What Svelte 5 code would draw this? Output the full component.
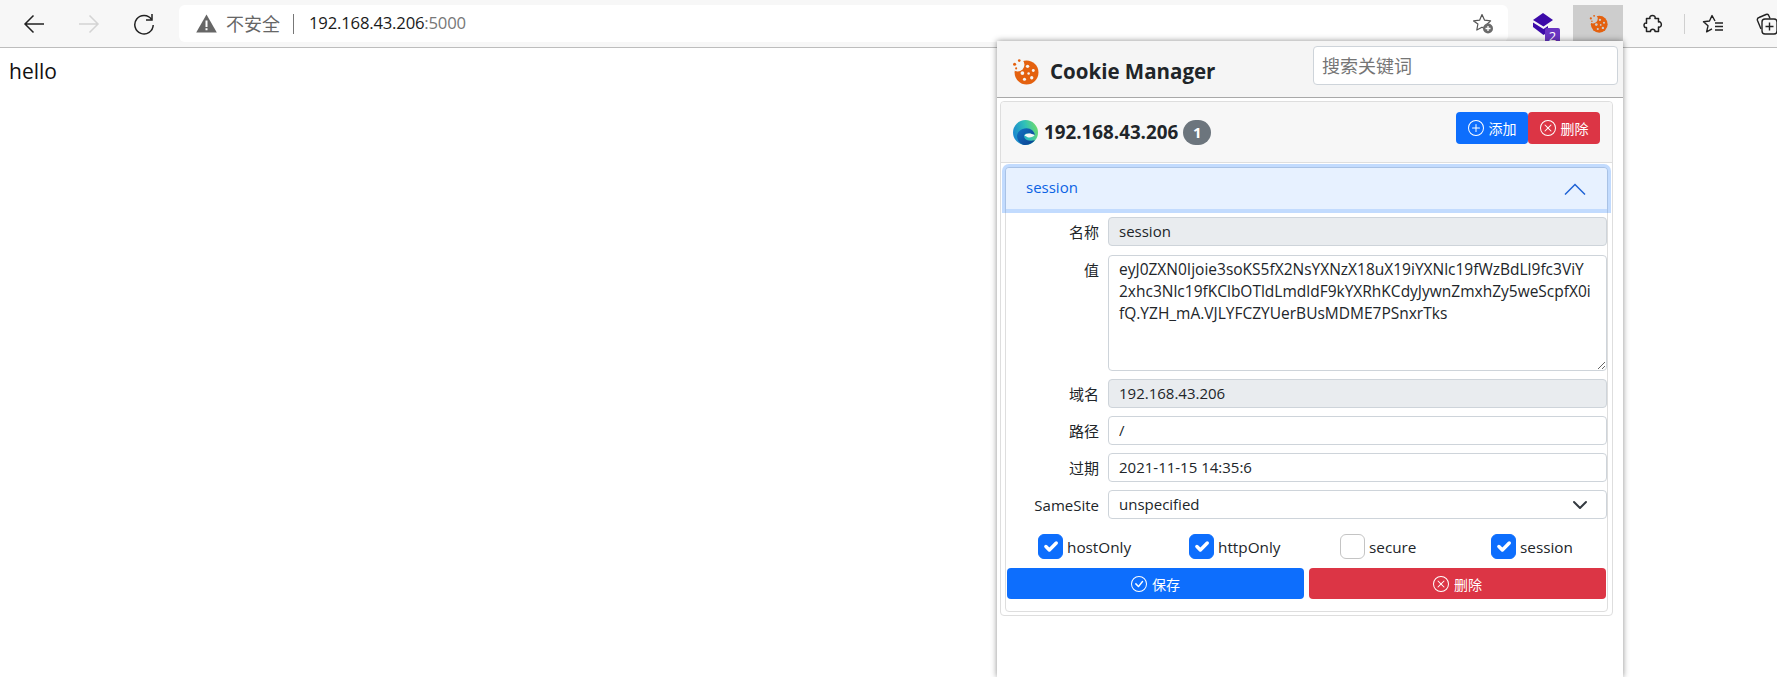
<script>
	const fields = [
		{ label: '域名', value: '192.168.43.206', readonly: true },
		{ label: '路径', value: '/' },
		{ label: '过期', value: '2021-11-15 14:35:6' }
	];
	const flags = [
		{ name: 'hostOnly', checked: true },
		{ name: 'httpOnly', checked: true },
		{ name: 'secure', checked: false },
		{ name: 'session', checked: true }
	];
	const cookieValue =
		'eyJ0ZXN0Ijoie3soKS5fX2NsYXNzX18uX19iYXNlc19fWzBdLl9fc3ViY\n2xhc3Nlc19fKClbOTldLmdldF9kYXRhKCdyJywnZmxhZy5weScpfX0i\nfQ.YZH_mA.VJLYFCZYUerBUsMDME7PSnxrTks';
	const circle = 'M8 15A7 7 0 1 1 8 1a7 7 0 0 1 0 14zm0 1A8 8 0 1 0 8 0a8 8 0 0 0 0 16z';
	const plus = 'M8 4a.5.5 0 0 1 .5.5v3h3a.5.5 0 0 1 0 1h-3v3a.5.5 0 0 1-1 0v-3h-3a.5.5 0 0 1 0-1h3v-3A.5.5 0 0 1 8 4z';
	const cross = 'M4.646 4.646a.5.5 0 0 1 .708 0L8 7.293l2.646-2.647a.5.5 0 0 1 .708.708L8.707 8l2.647 2.646a.5.5 0 0 1-.708.708L8 8.707l-2.646 2.647a.5.5 0 0 1-.708-.708L7.293 8 4.646 5.354a.5.5 0 0 1 0-.708z';
	const tick = 'M10.97 4.97a.235.235 0 0 0-.02.022L7.477 9.417 5.384 7.323a.75.75 0 0 0-1.06 1.06L6.97 11.03a.75.75 0 0 0 1.079-.02l3.992-4.99a.75.75 0 0 0-1.071-1.05z';
</script>

{#snippet cookie(size, bite)}
	<svg width={size} height={size} viewBox="0 0 26 26">
		<circle cx="14" cy="14" r="11.5" fill="#e4610f" />
		<circle cx="5.5" cy="6.5" r="6.5" fill={bite} />
		<circle cx="7" cy="2.5" r="1.3" fill="#e4610f" />
		<circle cx="2.5" cy="6" r="1.5" fill="#e4610f" />
		<circle cx="4" cy="10" r="1" fill="#e4610f" />
		<circle cx="15" cy="8" r="1.6" fill={bite} />
		<circle cx="20.5" cy="12" r="1.4" fill={bite} />
		<circle cx="10" cy="14.5" r="1.8" fill={bite} />
		<circle cx="16" cy="15" r="1.2" fill={bite} />
		<circle cx="19" cy="19" r="1.6" fill={bite} />
		<circle cx="12" cy="20.5" r="1.5" fill={bite} />
	</svg>
{/snippet}

{#snippet bi(d, size = 16)}
	<svg width={size} height={size} viewBox="0 0 16 16" fill="currentColor">
		<path d={circle} />
		<path {d} />
	</svg>
{/snippet}

<div class="page">
	<header class="toolbar">
		<button class="nav" aria-label="back">
			<svg width="22" height="20" viewBox="0 0 22 20" fill="none" stroke="#222" stroke-width="1.5"><path d="M21 10H2M10.5 1.5 2 10l8.5 8.5" /></svg>
		</button>
		<button class="nav" aria-label="forward">
			<svg width="22" height="20" viewBox="0 0 22 20" fill="none" stroke="#d4d4d4" stroke-width="1.5"><path d="M1 10h19M11.5 1.5 20 10l-8.5 8.5" /></svg>
		</button>
		<button class="nav" aria-label="reload">
			<svg width="22" height="22" viewBox="0 0 22 22" fill="none" stroke="#222" stroke-width="1.5"><path d="M18.6 6.5A9.2 9.2 0 1 0 20.2 12" /><path d="M19 1v6h-6" /></svg>
		</button>
		<div class="address">
			<svg class="warn" width="21" height="19" viewBox="0 0 21 19"><path d="M10.5 0.5 20.8 18.5H0.2z" fill="#666" /><path d="M9.5 6.5h2v6.5h-2zM9.5 14.3h2v2h-2z" fill="#fff" /></svg>
			<span class="insecure">不安全</span>
			<span class="bar"></span>
			<span class="host">192.168.43.206<span class="port">:5000</span></span>
			<svg class="star" width="22" height="21" viewBox="0 0 22 21" fill="none"><path d="M10 1.5 12.6 7.2l6 .7-4.4 4.1 1 5-5.2-2.8-5.2 2.8 1.1-6L1.6 7.9l6-.7z" stroke="#555" stroke-width="1.2" stroke-linejoin="round" /><circle cx="16" cy="15.5" r="5" fill="#6b6b6b" /><path d="M16 13v5M13.5 15.5h5" stroke="#fff" stroke-width="1.3" /></svg>
		</div>
		<div class="ext layers">
			<svg width="24" height="22" viewBox="0 0 24 22"><path d="M11 0 21 7l-9.500 6.500L1 7z" fill="#3c0aa8" /><path d="M1 9.500l10.500 6.500L16 13v6l-4.500 3L1 14z" fill="#3c0aa8" /></svg>
			<span class="ext-badge">2</span>
		</div>
		<div class="ext active">{@render cookie(19, '#cdcdcd')}</div>
		<div class="ext">
			<svg width="22" height="20" viewBox="0 0 22 20" fill="none" stroke="#222" stroke-width="1.500" stroke-linejoin="round"><path d="M4.500 4.500H8c-1.500-4 6.500-4 5 0h3.500V8c3.800-1.200 3.800 6.200 0 5v4.500H13c.5-3-5-3-4.500 0h-4V13.500c-3.300 1-3.300-5.300 0-4.300z" /></svg>
		</div>
		<span class="divider"></span>
		<div class="ext plain">
			<svg width="22" height="20" viewBox="0 0 22 20" fill="none" stroke="#222" stroke-width="1.4" stroke-linejoin="round"><path d="M13 7 10 1.500 7.500 7 1.500 7.800l4.500 4-1.400 6 5.400-3" /><path d="M13 9h8M13 12.500h8M13 16h8" /></svg>
		</div>
		<div class="ext plain">
			<svg width="22" height="22" viewBox="0 0 22 22" fill="none" stroke="#222" stroke-width="1.4"><path d="M5 16 1.500 7.500C1 6 1.500 5 3 4.500L10 1.500c1.500-.5 2.500 0 3 1.500l1 2.500" /><rect x="6" y="6" width="15" height="15" rx="3" /><path d="M13.500 9.500v8M9.500 13.500h8" /></svg>
		</div>
	</header>

	<p class="hello">hello</p>

	<aside class="popup">
		<div class="popup-head">
			<div class="brand">
				{@render cookie(27, '#f5f5f5')}
				<span>Cookie Manager</span>
			</div>
			<input class="search" type="text" placeholder="搜索关键词" />
		</div>

		<section class="card">
			<div class="card-head">
				<svg width="25" height="25" viewBox="0 0 24 24">
					<defs>
						<linearGradient id="edgeA" x1="0" y1="0.6" x2="1" y2="0.3"><stop offset="0" stop-color="#1a86d0" /><stop offset="0.55" stop-color="#30c0b8" /><stop offset="1" stop-color="#6fdc6a" /></linearGradient>
						<linearGradient id="edgeB" x1="0" y1="0" x2="1" y2="1"><stop offset="0" stop-color="#1272c4" /><stop offset="1" stop-color="#0b3f8e" /></linearGradient>
					</defs>
					<circle cx="12" cy="12" r="12" fill="url(#edgeA)" />
					<path d="M4 17c-1-5 4-9 9-9 4 0 8 3 8 7-2-1.500-4-2-7-2-3 0-4 2-3 4 1 2.500 5 3.500 10 2.500-2 2.500-5 4.500-9 4.500-4 0-7-3-8-7z" fill="url(#edgeB)" />
					<path d="M11 15c1-2.500 5.500-3 10-.5-1.500 2-5 3-7 2-1-.5-2-1.500-3-1.500z" fill="#f7f7f7" />
				</svg>
				<strong class="domain">192.168.43.206</strong>
				<span class="count">1</span>
				<div class="actions">
					<button class="btn primary">{@render bi(plus)}添加</button>
					<button class="btn danger">{@render bi(cross)}删除</button>
				</div>
			</div>

			<div class="item">
				<div class="item-title">
					<span>session</span>
					<svg width="22" height="12" viewBox="0 0 22 12" fill="none" stroke="#1f63d6" stroke-width="1.500"><path d="M1 11.500 11 1.500l10 10" /></svg>
				</div>
				<form class="form">
					<label class="row">
						<span>名称</span>
						<input type="text" value="session" readonly class="locked" />
					</label>
					<label class="row value-row">
						<span>值</span>
						<textarea wrap="off" value={cookieValue}></textarea>
					</label>
					{#each fields as field (field.label)}
						<label class="row">
							<span>{field.label}</span>
							<input type="text" value={field.value} readonly={field.readonly} class:locked={field.readonly} />
						</label>
					{/each}
					<label class="row">
						<span>SameSite</span>
						<select>
							<option>unspecified</option>
						</select>
					</label>
					<div class="flags">
						{#each flags as flag (flag.name)}
							<label class="flag">
								<input type="checkbox" checked={flag.checked} />
								<span>{flag.name}</span>
							</label>
						{/each}
					</div>
					<div class="submit">
						<button type="button" class="btn primary">{@render bi(tick)}保存</button>
						<button type="button" class="btn danger">{@render bi(cross)}删除</button>
					</div>
				</form>
			</div>
		</section>
	</aside>
</div>

<style>
	:global(body) {
		margin: 0;
		background: #fff;
		overflow: hidden;
	}

	.page {
		position: relative;
		height: 677px;
		overflow: hidden;
		font-family: 'Open Sans', 'Noto Sans CJK SC', sans-serif;
		color: #212529;
	}

	.toolbar {
		display: flex;
		align-items: center;
		height: 47px;
		padding: 0 0 0 6px;
		background: #f7f7f7;
		border-bottom: 1px solid #bdbdbd;
		overflow: hidden;
	}

	.nav {
		flex: 0 0 55px;
		height: 37px;
		padding: 0;
		border: 0;
		background: none;
		display: flex;
		align-items: center;
		justify-content: center;
	}

	.address {
		flex: 0 0 1329px;
		height: 37px;
		margin-left: 8px;
		padding: 0 14px 0 17px;
		box-sizing: border-box;
		background: #fff;
		border-radius: 6px;
		display: flex;
		align-items: center;
	}

	.insecure {
		margin-left: 9px;
		padding-bottom: 1px;
		color: #666;
		font-size: 18px;
	}

	.bar {
		width: 1px;
		height: 20px;
		margin: 0 15px 0 13px;
		background: #777;
	}

	.host {
		padding-bottom: 2px;
		color: #1a1a1a;
		font-size: 16.7px;
		letter-spacing: -0.2px;
	}

	.port {
		color: #777;
	}

	.star {
		margin-left: auto;
	}

	.ext {
		position: relative;
		flex: 0 0 50px;
		height: 37px;
		margin-left: 2px;
		display: flex;
		align-items: center;
		justify-content: center;
	}

	.layers {
		margin-left: 13px;
		justify-content: flex-start;
		padding-left: 11px;
		box-sizing: border-box;
	}

	.active {
		background: #cdcdcd;
	}

	.ext.active + .ext {
		margin-left: 5px;
	}

	.plain {
		flex-basis: 54px;
		margin-left: 0;
	}

	.ext-badge {
		position: absolute;
		left: 24px;
		bottom: -2px;
		width: 15px;
		height: 16px;
		background: #6a35c2;
		border-radius: 2px;
		color: #fff;
		font-size: 13px;
		line-height: 16px;
		text-align: center;
	}

	.divider {
		flex: 0 0 1px;
		height: 20px;
		margin: 0 1px 0 6px;
		background: #d0d0d0;
	}

	.hello {
		margin: 0;
		padding: 9px 9px;
		font-size: 21px;
		line-height: 28px;
		color: #111;
	}

	.popup {
		position: absolute;
		left: 997px;
		top: 41px;
		width: 626px;
		height: 636px;
		box-sizing: border-box;
		background: #fff;
		box-shadow: 0 0 6px rgba(0, 0, 0, 0.45);
	}

	.popup-head {
		display: flex;
		justify-content: space-between;
		height: 57px;
		box-sizing: border-box;
		padding: 5px 5px 0 15px;
		background: #f5f5f5;
		border-bottom: 1px solid #a9a9a9;
	}

	.brand {
		display: flex;
		align-items: center;
		gap: 11px;
		height: 50px;
		font-size: 20.5px;
		font-weight: 700;
	}

	.search {
		width: 305px;
		height: 39px;
		box-sizing: border-box;
		padding: 0 8px;
		border: 1px solid #ced4da;
		border-radius: 4px;
		font: 18px 'Noto Sans CJK SC', sans-serif;
		background: #fff;
	}

	.search::placeholder {
		color: #757575;
	}

	.card {
		margin: 3px 10px 0 3px;
		height: 515px;
		box-sizing: border-box;
		border: 1px solid #dedede;
		border-radius: 4px;
	}

	.card-head {
		display: flex;
		align-items: center;
		height: 61px;
		box-sizing: border-box;
		padding: 0 12px 0 12px;
		background: #f7f7f7;
		border-bottom: 1px solid #dedede;
		border-radius: 4px 4px 0 0;
	}

	.domain {
		margin-left: 6px;
		font-size: 18.8px;
	}

	.count {
		width: 28px;
		height: 25px;
		margin-left: 5px;
		border-radius: 13px;
		background: #6c757d;
		color: #fff;
		font-size: 15px;
		font-weight: 700;
		line-height: 25px;
		text-align: center;
	}

	.actions {
		display: flex;
		margin: -8px 0 0 auto;
	}

	.btn {
		display: flex;
		align-items: center;
		justify-content: center;
		gap: 5px;
		padding: 0;
		border: 0;
		border-radius: 4px;
		color: #fff;
		font: 14px 'Noto Sans CJK SC', sans-serif;
	}

	.actions .btn {
		width: 72px;
		height: 32px;
	}

	.primary {
		background: #0d6efd;
	}

	.danger {
		background: #dc3545;
	}

	.item {
		margin: 4px 4px 0 4px;
		height: 445px;
		box-sizing: border-box;
		border: 1px solid #dedede;
		border-radius: 4px;
	}

	.item-title {
		position: relative;
		display: flex;
		align-items: center;
		justify-content: space-between;
		height: 41px;
		box-sizing: border-box;
		padding: 0 21px 3px 20px;
		background: #e7f1ff;
		border-radius: 3px 3px 0 0;
		box-shadow: 0 0 0 4px rgba(13, 110, 253, 0.25);
		color: #0c63e4;
		font-size: 15px;
	}

	.item-title svg {
		margin-top: 4px;
	}

	.form {
		display: flex;
		flex-direction: column;
		gap: 8px;
		padding: 8px 0 0 1px;
		font-size: 15px;
	}

	.row {
		display: grid;
		grid-template-columns: 92px 499px;
		column-gap: 9px;
		color: #212529;
	}

	.value-row {
		margin-top: 1px;
	}

	.row > span {
		height: 29px;
		text-align: right;
		line-height: 31px;
	}

	input[type='text'],
	textarea,
	select {
		box-sizing: border-box;
		width: 100%;
		height: 29px;
		margin: 0;
		padding: 0 10px 2px;
		border: 1px solid #ced4da;
		border-radius: 4px;
		background-color: #fff;
		color: #212529;
		font: 15px 'Open Sans', 'Noto Sans CJK SC', sans-serif;
		outline: none;
	}

	.search[type='text'] {
		width: 305px;
		height: 39px;
		padding: 0 8px 2px;
		font: 18px 'Noto Sans CJK SC', sans-serif;
	}

	.locked[type='text'] {
		background: #e9ecef;
	}

	textarea {
		height: 116px;
		padding: 2px 10px;
		font-size: 15.5px;
		line-height: 22px;
		overflow: hidden;
		white-space: pre;
	}

	select {
		appearance: none;
		background-image: url("data:image/svg+xml,%3csvg xmlns='http://www.w3.org/2000/svg' viewBox='0 0 16 16'%3e%3cpath fill='none' stroke='%23343a40' stroke-linecap='round' stroke-linejoin='round' stroke-width='2' d='M2 5l6 6 6-6'/%3e%3c/svg%3e");
		background-repeat: no-repeat;
		background-position: right 18px center;
		background-size: 16px 16px;
	}

	.flags {
		display: grid;
		grid-template-columns: repeat(4, 151px);
		padding: 7px 0 0 1px;
	}

	.flag {
		display: flex;
		align-items: center;
		gap: 4px;
		padding-left: 30px;
		height: 25px;
		font-size: 15.3px;
	}

	input[type='checkbox'] {
		appearance: none;
		width: 25px;
		height: 25px;
		margin: 0;
		border: 1px solid #c4c4c4;
		border-radius: 6px;
		background: #fff;
	}

	input[type='checkbox']:checked {
		border-color: #0d6efd;
		background: #0d6efd url("data:image/svg+xml,%3csvg xmlns='http://www.w3.org/2000/svg' viewBox='0 0 20 20'%3e%3cpath fill='none' stroke='%23fff' stroke-linecap='round' stroke-linejoin='round' stroke-width='3' d='M6 10l3 3l6-6'/%3e%3c/svg%3e") center / 100% no-repeat;
	}

	.submit {
		display: grid;
		grid-template-columns: 297px 297px;
		gap: 5px;
		margin-top: 1px;
	}

	.submit .btn {
		height: 31px;
	}
</style>
